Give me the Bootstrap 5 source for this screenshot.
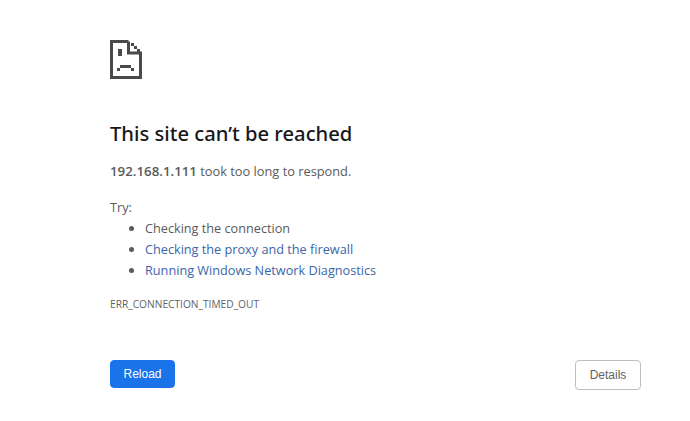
<!DOCTYPE html>
<html lang="en">
<head>
<meta charset="utf-8">
<title>192.168.1.111</title>
<link rel="stylesheet" href="https://cdn.jsdelivr.net/npm/bootstrap@5.3.0/dist/css/bootstrap.min.css">
<style>
html, body { height: 421px; overflow: hidden; }
body { background: #fff; color: #5a5a5a; font-family: "Open Sans", "Noto Sans", sans-serif; font-size: 13px; }
.err-page { padding: 40px 49px 0 110px; height: 421px; }
.err-icon { display: block; width: 32px; height: 39px; }
.err-title { margin: 41px 0 0; font-size: 20.2px; line-height: 27px; font-weight: 500; color: #17181a; font-family: "Noto Sans", sans-serif; }
.err-summary { margin: 14px 0 0; line-height: 20px; font-size: 12.8px; }
.err-summary strong { font-weight: 600; font-size: 13.3px; }
.err-try { margin: 16px 0 0; line-height: 20px; font-size: 12.7px; }
.err-list { margin: 1px 0 0; padding-left: 35px; line-height: 21px; font-size: 12.7px; }
.err-list a { color: #3a66a8; text-decoration: none; }
.err-code { margin: 16px 0 0; font-size: 10.2px; line-height: 14px; color: #5f6368; }
.err-actions { margin-top: 49px; }
.err-reload { width: 65px; height: 28px; padding: 0; background: #1a73e8; border: 1px solid #1a73e8; border-radius: 4px; color: #fff; font: 12px/1 "Liberation Sans", sans-serif; }
.err-details { width: 66px; height: 30px; padding: 0; background: #fff; border: 1px solid #bcbec0; border-radius: 4px; color: #5f6368; font: 12px/1 "Liberation Sans", sans-serif; }
</style>
</head>
<body>
<main class="err-page">
  <svg class="err-icon" viewBox="0 0 32 39" aria-hidden="true">
    <path fill="none" stroke="#4a4a4a" stroke-width="3" d="M18.5 1.5H1.5V37.5H30.5V13H18.5V1.5"/>
    <rect x="8" y="9" width="4" height="7" fill="#4a4a4a"/>
    <path fill="#4a4a4a" d="M21 3h3v3h-3zM24 6h3v3h-3zM27 9h3v3h-3z"/>
    <path fill="#4a4a4a" d="M7 28h3v-3h11v3h3v3h-3v-3H10v3H7z"/>
  </svg>
  <h1 class="err-title">This site can’t be reached</h1>
  <p class="err-summary"><strong>192.168.1.111</strong> took too long to respond.</p>
  <p class="err-try">Try:</p>
  <ul class="err-list">
    <li>Checking the connection</li>
    <li><a href="#">Checking the proxy and the firewall</a></li>
    <li><a href="#">Running Windows Network Diagnostics</a></li>
  </ul>
  <div class="err-code">ERR_CONNECTION_TIMED_OUT</div>
  <div class="err-actions d-flex justify-content-between align-items-start">
    <button type="button" class="btn err-reload">Reload</button>
    <button type="button" class="btn err-details">Details</button>
  </div>
</main>
<script src="https://cdn.jsdelivr.net/npm/bootstrap@5.3.0/dist/js/bootstrap.bundle.min.js"></script>
</body>
</html>
